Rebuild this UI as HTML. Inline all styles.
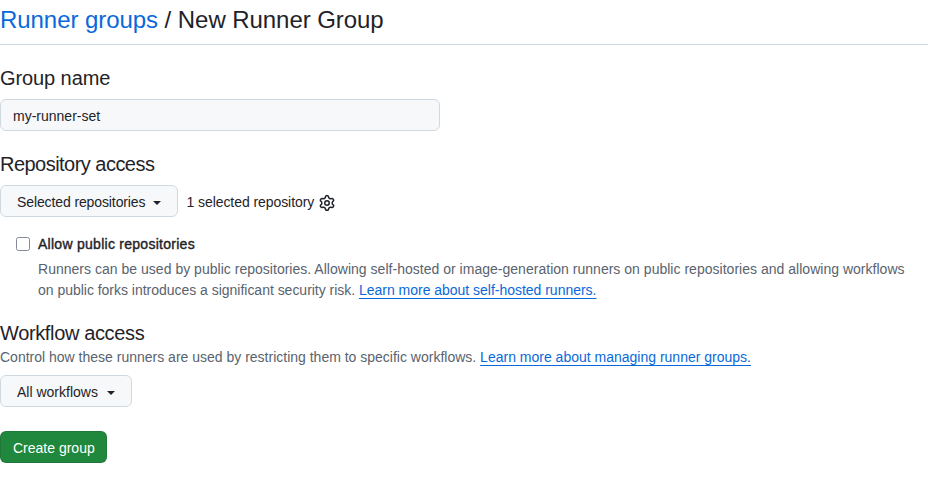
<!DOCTYPE html>
<html>
<head>
<meta charset="utf-8">
<style>
html,body{margin:0;padding:0;background:#fff;}
body{font-family:"Liberation Sans",sans-serif;color:#1f2328;font-size:14px;line-height:1.5;width:928px;height:478px;overflow:hidden;position:relative;}
.abs{position:absolute;white-space:nowrap;}
a{color:#0969da;text-decoration:none;}
.title{left:0;top:5px;font-size:24px;line-height:30px;letter-spacing:-0.06px;}
.rule{position:absolute;left:0;top:44px;width:928px;height:1px;background:#d1d9e0;}
.h2{font-size:20px;line-height:26px;}
.input{position:absolute;left:0;top:99px;width:438px;height:30px;border:1px solid #d1d9e0;border-radius:6px;background:#f6f8fa;box-sizing:content-box;}
.input span{position:absolute;left:12px;top:6px;font-size:14px;line-height:20px;}
.btn{position:absolute;border:1px solid #d1d9e0;border-radius:6px;background:#f6f8fa;box-sizing:border-box;}
.btn span{position:absolute;font-size:14px;line-height:20px;}
.caret{position:absolute;width:0;height:0;border-left:4px solid transparent;border-right:4px solid transparent;border-top:4px solid #1f2328;}
.muted{color:#59636e;}
.link{color:#0969da;text-decoration:underline;text-underline-offset:3px;}
.chk{position:absolute;left:16px;top:237px;width:14px;height:14px;border:1px solid #858a9c;border-radius:2.5px;box-sizing:border-box;background:#fff;}
.green{position:absolute;left:0;top:431px;width:107px;height:32px;background:#1f883d;border-radius:6px;border:1px solid rgba(31,35,40,0.15);box-sizing:border-box;}
.green span{position:absolute;left:12px;top:6px;color:#fff;font-size:14px;line-height:20px;}
</style>
</head>
<body>
<div class="abs title"><a href="#">Runner groups</a> / New Runner Group</div>
<div class="rule"></div>

<div class="abs h2" style="left:0;top:65px;letter-spacing:-0.09px;">Group name</div>
<div class="input"><span>my-runner-set</span></div>

<div class="abs h2" style="left:0;top:151px;letter-spacing:-0.53px;">Repository access</div>
<div class="btn" style="left:0;top:185px;width:178px;height:32px;"><span style="left:16px;top:6px;letter-spacing:-0.11px;">Selected repositories</span><div class="caret" style="left:152px;top:15px;"></div></div>
<div class="abs" style="left:186.5px;top:192px;line-height:20px;letter-spacing:-0.07px;">1 selected repository</div>
<svg class="abs" style="left:319px;top:195px;" width="16" height="16" viewBox="0 0 16 16"><path fill="#1f2328" d="M8 0a8.2 8.2 0 0 1 .701.031C9.444.095 9.99.645 10.16 1.29l.288 1.107c.018.066.079.158.212.224.231.114.454.243.668.386.123.082.233.09.299.071l1.103-.303c.644-.176 1.392.021 1.82.63.27.385.506.792.704 1.218.315.675.111 1.422-.364 1.891l-.814.806c-.049.048-.098.147-.088.294.016.257.016.515 0 .772-.01.147.038.246.088.294l.814.806c.475.469.679 1.216.364 1.891a7.977 7.977 0 0 1-.704 1.217c-.428.61-1.176.807-1.82.63l-1.102-.302c-.067-.019-.177-.011-.3.071a5.909 5.909 0 0 1-.668.386c-.133.066-.194.158-.211.224l-.29 1.106c-.168.646-.715 1.196-1.458 1.26a8.006 8.006 0 0 1-1.402 0c-.743-.064-1.289-.614-1.458-1.26l-.289-1.106c-.018-.066-.079-.158-.212-.224a5.738 5.738 0 0 1-.668-.386c-.123-.082-.233-.09-.299-.071l-1.103.303c-.644.176-1.392-.021-1.82-.63a8.12 8.12 0 0 1-.704-1.218c-.315-.675-.111-1.422.363-1.891l.815-.806c.05-.048.098-.147.088-.294a6.214 6.214 0 0 1 0-.772c.01-.147-.038-.246-.088-.294l-.815-.806C.635 6.045.431 5.298.746 4.623a7.92 7.92 0 0 1 .704-1.217c.428-.61 1.176-.807 1.82-.63l1.102.302c.067.019.177.011.3-.071.214-.143.437-.272.668-.386.133-.066.194-.158.211-.224l.29-1.106C6.009.645 6.556.095 7.299.03 7.53.01 7.764 0 8 0Zm-.571 1.525c-.036.003-.108.036-.137.146l-.289 1.105c-.147.561-.549.967-.998 1.189-.173.086-.34.183-.5.29-.417.278-.97.423-1.529.27l-1.103-.303c-.109-.03-.175.016-.195.045-.22.312-.412.644-.573.99-.014.031-.021.11.059.19l.815.806c.411.406.562.957.53 1.456a4.709 4.709 0 0 0 0 .582c.032.499-.119 1.05-.53 1.456l-.815.806c-.081.08-.073.159-.059.19.162.346.353.677.573.989.02.03.085.076.195.046l1.102-.303c.56-.153 1.113-.008 1.53.27.161.107.328.204.501.29.447.222.85.629.997 1.189l.289 1.105c.029.109.101.143.137.146a6.6 6.6 0 0 0 1.142 0c.036-.003.108-.036.137-.146l.289-1.105c.147-.561.549-.967.998-1.189.173-.086.34-.183.5-.29.417-.278.97-.423 1.529-.27l1.103.303c.109.029.175-.016.195-.045.22-.313.411-.644.573-.99.014-.031.021-.11-.059-.19l-.815-.806c-.411-.406-.562-.957-.53-1.456a4.709 4.709 0 0 0 0-.582c-.032-.499.119-1.05.53-1.456l.815-.806c.081-.08.073-.159.059-.19a6.464 6.464 0 0 0-.573-.989c-.02-.03-.085-.076-.195-.046l-1.102.303c-.56.153-1.113.008-1.53-.27a4.44 4.44 0 0 0-.501-.29c-.447-.222-.85-.629-.997-1.189l-.289-1.105c-.029-.11-.101-.143-.137-.146a6.6 6.6 0 0 0-1.142 0ZM11 8a3 3 0 1 1-6 0 3 3 0 0 1 6 0ZM9.5 8a1.5 1.5 0 1 0-3.001.001A1.5 1.5 0 0 0 9.5 8Z"/></svg>

<div class="chk"></div>
<div class="abs" style="left:38px;top:234px;line-height:20px;-webkit-text-stroke:0.4px #1f2328;letter-spacing:0.27px;">Allow public repositories</div>
<div class="abs muted" style="left:38px;top:259px;line-height:21px;letter-spacing:0.02px;">Runners can be used by public repositories. Allowing self-hosted or image-generation runners on public repositories and allowing workflows</div>
<div class="abs muted" style="left:38px;top:280px;line-height:21px;letter-spacing:-0.02px;">on public forks introduces a significant security risk. <a class="link" href="#">Learn more about self-hosted runners.</a></div>

<div class="abs h2" style="left:0;top:320px;letter-spacing:-0.36px;">Workflow access</div>
<div class="abs muted" style="left:0;top:347px;line-height:21px;">Control how these runners are used by restricting them to specific workflows. <a class="link" href="#">Learn more about managing runner groups.</a></div>
<div class="btn" style="left:0;top:375px;width:132px;height:32px;"><span style="left:16px;top:6px;">All workflows</span><div class="caret" style="left:106px;top:15px;"></div></div>

<div class="green"><span>Create group</span></div>
</body>
</html>
